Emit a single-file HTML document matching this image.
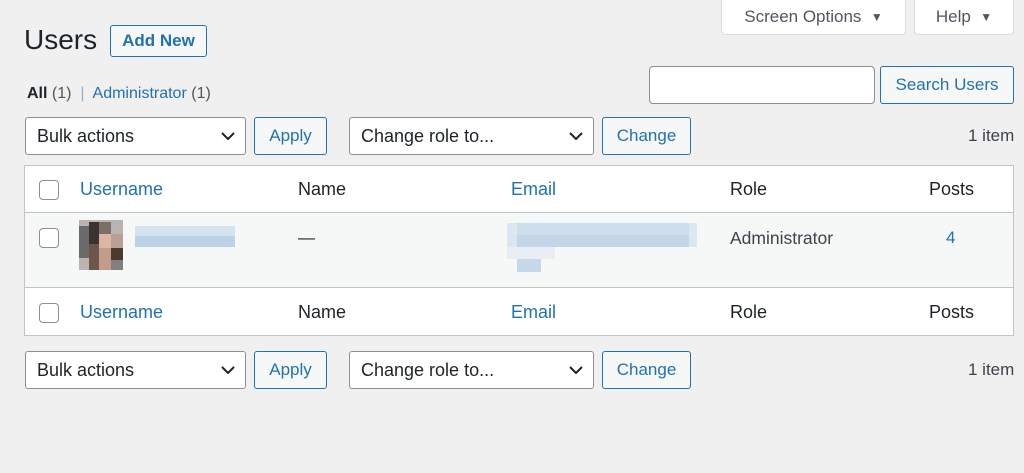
<!DOCTYPE html>
<html><head><style>
*{box-sizing:border-box;margin:0;padding:0}
body{width:1024px;height:473px;background:#f0f0f1;font-family:"Liberation Sans",sans-serif;color:#1d2327;position:relative;overflow:hidden;font-size:17px}
.a{position:absolute}
.btn{position:absolute;border:1px solid #2271b1;border-radius:3px;background:#f6f7f7;color:#2271b1;font-size:17px;display:flex;align-items:center;justify-content:center}
.sel{position:absolute;border:1px solid #8c8f94;border-radius:3px;background:#fff;font-size:18px;padding-left:11px;display:flex;align-items:center}
.sel svg{position:absolute;right:10px;top:50%;margin-top:-4px}
.tab{position:absolute;background:#fff;border:1px solid #dcdcde;border-top:none;border-radius:0 0 4px 4px;color:#50575e;font-size:17px;display:flex;align-items:center;justify-content:center}
.cb{position:absolute;width:20px;height:20px;border:1px solid #8c8f94;border-radius:4px;background:#fff}
.blue{color:#2271b1}
.h{font-size:18px}
.px{position:absolute}
</style></head><body>
<div class="tab" style="left:721px;top:0;width:185px;height:35px">Screen Options&nbsp;&nbsp;<span style="font-size:12px">▼</span></div>
<div class="tab" style="left:914px;top:0;width:100px;height:35px">Help&nbsp;&nbsp;<span style="font-size:12px">▼</span></div>

<div class="a" style="left:24px;top:24px;font-size:28px;color:#1d2327">Users</div>
<div class="btn" style="left:110px;top:25px;width:97px;height:32px;font-weight:bold;font-size:17px">Add New</div>

<div class="a" style="left:27px;top:85px;font-size:16px"><b>All</b> <span style="color:#50575e">(1)</span> <span style="color:#a7aaad">&nbsp;|&nbsp;</span> <span class="blue">Administrator</span> <span style="color:#50575e">(1)</span></div>

<div class="a" style="left:649px;top:66px;width:226px;height:38px;background:#fff;border:1px solid #8c8f94;border-radius:4px"></div>
<div class="btn" style="left:880px;top:66px;width:134px;height:38px">Search Users</div>

<div class="sel" style="left:25px;top:117px;width:221px;height:38px">Bulk actions<svg width="14" height="8"><path d="M1 1l6 6 6-6" stroke="#1d2327" stroke-width="2" fill="none"/></svg></div>
<div class="btn" style="left:254px;top:117px;width:73px;height:38px">Apply</div>
<div class="sel" style="left:349px;top:117px;width:245px;height:38px">Change role to...<svg width="14" height="8"><path d="M1 1l6 6 6-6" stroke="#1d2327" stroke-width="2" fill="none"/></svg></div>
<div class="btn" style="left:602px;top:117px;width:89px;height:38px">Change</div>
<div class="a" style="left:968px;top:126px;color:#3c434a">1 item</div>

<div class="a" style="left:24px;top:165px;width:990px;height:171px;border:1px solid #c3c4c7;background:#fff"></div>
<div class="a" style="left:25px;top:212px;width:988px;height:76px;background:#f6f7f7;border-top:1px solid #c3c4c7;border-bottom:1px solid #c3c4c7"></div>

<div class="cb" style="left:39px;top:180px"></div>
<div class="a blue h" style="left:80px;top:179px">Username</div>
<div class="a h" style="left:298px;top:179px">Name</div>
<div class="a blue h" style="left:511px;top:179px">Email</div>
<div class="a h" style="left:730px;top:179px">Role</div>
<div class="a h" style="left:929px;top:179px">Posts</div>

<div class="cb" style="left:39px;top:228px"></div>
<div class="px" style="left:79px;top:220px;width:44px;height:50px;background:#b9b4b0"></div>
<div class="px" style="left:79px;top:226px;width:10px;height:32px;background:#6a6a6a"></div>
<div class="px" style="left:89px;top:222px;width:10px;height:22px;background:#3a332e"></div>
<div class="px" style="left:99px;top:222px;width:12px;height:12px;background:#7c6f67"></div>
<div class="px" style="left:99px;top:234px;width:12px;height:14px;background:#dbb6a4"></div>
<div class="px" style="left:89px;top:244px;width:10px;height:26px;background:#6c5549"></div>
<div class="px" style="left:99px;top:248px;width:12px;height:22px;background:#c29c88"></div>
<div class="px" style="left:111px;top:234px;width:12px;height:14px;background:#b8a096"></div>
<div class="px" style="left:111px;top:248px;width:12px;height:12px;background:#4a3a30"></div>
<div class="px" style="left:111px;top:260px;width:12px;height:10px;background:#808080"></div>
<div class="px" style="left:135px;top:226px;width:100px;height:10px;background:#d5e2ef"></div>
<div class="px" style="left:135px;top:236px;width:100px;height:11px;background:#bcd2e6"></div>
<div class="a" style="left:298px;top:228px">—</div>
<div class="px" style="left:507px;top:223px;width:190px;height:12px;background:#dde7f1"></div>
<div class="px" style="left:517px;top:223px;width:172px;height:12px;background:#cfdeec"></div>
<div class="px" style="left:507px;top:235px;width:190px;height:12px;background:#dbe6f0"></div>
<div class="px" style="left:517px;top:235px;width:172px;height:12px;background:#c3d6e8"></div>
<div class="px" style="left:507px;top:247px;width:48px;height:12px;background:#e8eef4"></div>
<div class="px" style="left:517px;top:259px;width:24px;height:13px;background:#c5d8ea"></div>
<div class="a" style="left:730px;top:228px;color:#3c434a;font-size:17.5px">Administrator</div>
<div class="a blue" style="left:946px;top:228px">4</div>

<div class="cb" style="left:39px;top:303px"></div>
<div class="a blue h" style="left:80px;top:302px">Username</div>
<div class="a h" style="left:298px;top:302px">Name</div>
<div class="a blue h" style="left:511px;top:302px">Email</div>
<div class="a h" style="left:730px;top:302px">Role</div>
<div class="a h" style="left:929px;top:302px">Posts</div>

<div class="sel" style="left:25px;top:351px;width:221px;height:38px">Bulk actions<svg width="14" height="8"><path d="M1 1l6 6 6-6" stroke="#1d2327" stroke-width="2" fill="none"/></svg></div>
<div class="btn" style="left:254px;top:351px;width:73px;height:38px">Apply</div>
<div class="sel" style="left:349px;top:351px;width:245px;height:38px">Change role to...<svg width="14" height="8"><path d="M1 1l6 6 6-6" stroke="#1d2327" stroke-width="2" fill="none"/></svg></div>
<div class="btn" style="left:602px;top:351px;width:89px;height:38px">Change</div>
<div class="a" style="left:968px;top:360px;color:#3c434a">1 item</div>
</body></html>
